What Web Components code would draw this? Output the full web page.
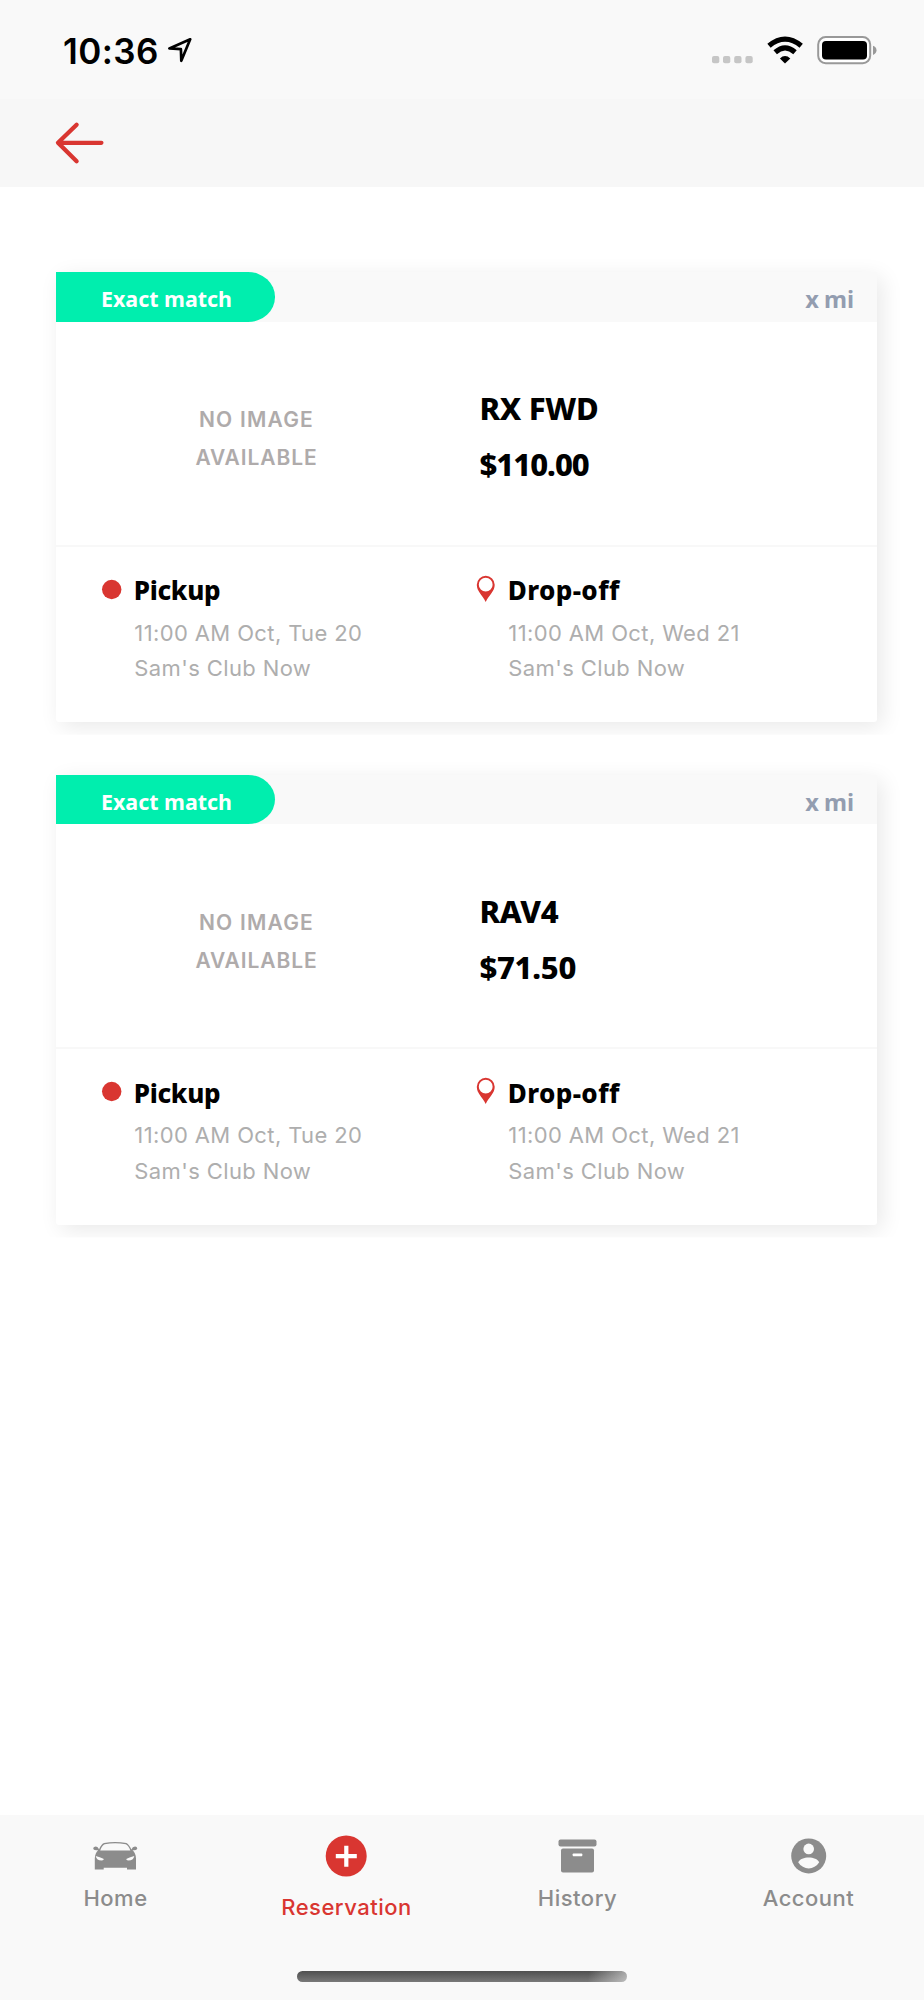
<!DOCTYPE html>
<html lang="en"><head><meta charset="utf-8"><title>Reservation</title>
<style>html,body{margin:0;background:#fff}body{font-family:Inter,"Liberation Sans",sans-serif}</style></head>
<body><reservation-app></reservation-app>
<script>
const define=(name,html)=>customElements.define(name,class extends HTMLElement{
  constructor(){super();this.attachShadow({mode:'open'}).innerHTML=html;}
});
define('status-bar',`<style>
:host{display:flex;justify-content:space-between;height:99px;box-sizing:border-box;background:#f9f9f9;color:#000}
.time{display:flex;margin-left:63px}.time span{font-size:35px;font-weight:600;line-height:40px;margin-top:31px;letter-spacing:.4px;width:105px;white-space:nowrap}
svg{display:block}</style>
<div class="time"><span>10:36</span><svg width="30" height="99" viewBox="168 0 30 99"><path d="M190.2 39.3 169.4 48.4 180.9 49.2 181.3 60.8Z" fill="none" stroke="#000" stroke-width="2.7" stroke-linejoin="round"/></svg></div>
<svg width="224" height="99" viewBox="700 0 224 99"><g fill="#c6c6c6"><rect x="712" y="56" width="7.3" height="7.3" rx="2"/><rect x="723" y="56" width="7.3" height="7.3" rx="2"/><rect x="734.2" y="56" width="7.3" height="7.3" rx="2"/><rect x="745.4" y="56" width="7.3" height="7.3" rx="2"/></g>
<path d="M785 63.4 779.9 58.4Q785 53.8 790.3 58.4Z"/><g fill="none" stroke="#000" stroke-width="5.2"><path d="M769 45.8Q785 32.5 801.2 45.8"/><path d="M775.2 52.2Q785 43.5 795 52.2"/></g>
<rect x="818.2" y="37" width="52" height="26.2" rx="7.5" fill="#fff" stroke="#999" stroke-width="2"/><rect x="822" y="41" width="45" height="18.5" rx="4"/><path d="M873 45.7q3.5 1.4 3.5 4.6t-3.5 4.6Z" fill="#999"/></svg>`);
define('nav-header',`<style>:host{display:flex;height:88px;background:#f7f7f7}svg{margin-left:50px}</style>
<svg width="60" height="88" viewBox="50 99 60 88"><path d="M101.4 142.8H58M76.6 124.7 58 142.8 76.6 161.2" fill="none" stroke="#d93631" stroke-width="4.3" stroke-linecap="round" stroke-linejoin="round"/></svg>`);
define('trip-stop',`<style>
:host{display:grid;grid-template-columns:38px 1fr;width:374px}
h3{margin:0 0 0 -1.3px;font:800 26px/36px "Noto Sans",sans-serif;padding-top:25.6px;white-space:nowrap;letter-spacing:-.3px}
p{margin:0 0 0 -.7px;grid-column:2;font-size:22px;line-height:35.5px;color:#aeaeae;letter-spacing:.38px;white-space:nowrap}
.d{padding-top:7.4px}
.icon{height:61px}
</style><div class="icon"><slot name="icon"></slot></div><h3><slot name="title"></slot></h3><p class="d"><slot name="date"></slot></p><p><slot name="place"></slot></p>`);
define('vehicle-card',`<style>
:host{display:block;width:821px;height:450px;background:#fff;border-radius:3px;box-shadow:5px 5px 22px rgba(0,0,0,.09);clip-path:inset(-22px -30px -12.7px -30px)}
header{height:49.6px;background:#f9f9f9;display:flex;justify-content:space-between}
.tag{width:219px;box-sizing:border-box;padding:9px 0 0 45px;background:#00eeae;border-radius:0 27px 27px 0/0 24.8px 24.8px 0;color:#fff;font:700 21.4px/36px "Noto Sans",sans-serif;white-space:nowrap}
.dist{font:700 23.6px/36px "Noto Sans",sans-serif;padding:9px 23px 0 0;color:#939db0;word-spacing:-1px}
.car{display:flex;height:223px;border-bottom:2px solid #f8f8f8}
.none{width:401px;padding-top:79.2px;text-align:center;color:#afabab;font-size:21px;font-weight:600;line-height:38px;letter-spacing:.9px}
.wide{letter-spacing:1.2px}
.info{margin-left:22.5px;padding-top:58.3px;font:800 31px/56px "Noto Sans",sans-serif;letter-spacing:-.3px}
.stops{display:flex;padding-left:41px}
svg{display:block}
</style>
<header><span class="tag"><span>Exact match</span></span><span class="dist">x mi</span></header>
<div class="car"><div class="none"><span class="wide">NO IMAGE</span><br><span>AVAILABLE</span></div><div class="info"><slot name="model"></slot><br><slot name="price"></slot></div></div>
<div class="stops"><trip-stop><svg slot="icon" width="38" height="62" viewBox="97 547 38 62"><circle cx="111.7" cy="589.5" r="9.7" fill="#d93631"/></svg><span slot="title">Pickup</span><span slot="date">11:00 AM Oct, Tue 20</span><span slot="place">Sam's Club Now</span></trip-stop>
<trip-stop><svg slot="icon" width="38" height="62" viewBox="471 547 38 62"><path fill="#d93631" fill-rule="evenodd" d="M485.7 602C482 594.5 476.8 591.3 476.8 584.8A8.9 8.9 0 0 1 494.7 584.8C494.7 591.3 489.5 594.5 485.7 602ZM485.7 577.8A6.9 6.9 0 1 0 485.7 591.6A6.9 6.9 0 1 0 485.7 577.8Z"/></svg><span slot="title" style="letter-spacing:.4px">Drop-off</span><span slot="date">11:00 AM Oct, Wed 21</span><span slot="place">Sam's Club Now</span></trip-stop></div>`);
define('tab-item',`<style>
:host{display:flex;flex-direction:column;align-items:center;width:231px;color:#8c8c8c}
:host([active]){color:#d93631}
span{font-size:22px;font-weight:450;line-height:32px;letter-spacing:.5px}
:host([active]) span{margin-top:9px}
</style><slot name="icon"></slot><span><slot></slot></span>`);
define('tab-bar',`<style>
:host{display:flex;flex-direction:column;align-items:center;height:185.5px;background:#f9f9f9}
nav{display:flex;width:924px;height:156.5px}svg{display:block;margin-top:-.6px}
.home{width:330px;height:11px;border-radius:6px;background:linear-gradient(100deg,transparent 88%,#f9f9f988 100%),linear-gradient(#4f4f4f,#797979)}
</style><nav>
<tab-item><svg slot="icon" width="60" height="68" viewBox="86 1814.5 60 68" fill="#8c8c8c"><path fill-rule="evenodd" d="M99 1850Q101.2 1844.6 104 1843.5Q115 1841.4 126.5 1843.5Q129.2 1845 131.4 1850Q132.5 1847 135 1847Q137.5 1847.3 137.2 1849.5Q136 1851.2 132.5 1850.7Q135.8 1853.4 136 1859V1870H127V1868.2H103.7V1870H94.8V1859Q95 1853.4 98.2 1850.7Q94.5 1851.2 93.2 1849.5Q93 1847.3 95.5 1847Q98 1847 99 1850ZM100.2 1851H130.4Q128.2 1845.5 125.8 1844.7Q115 1843 104.7 1844.7Q102.2 1845.5 100.2 1851ZM95.7 1856.5Q96.7 1861 101.5 1861Q104.5 1861 103.4 1859.3Q100 1857.5 95.7 1856.5ZM134.3 1856.5Q130 1857.5 126.7 1859.3Q125.5 1861 128.5 1861Q133.4 1861 134.3 1856.5Z"/></svg>Home</tab-item>
<tab-item active><svg slot="icon" width="60" height="68" viewBox="317 1814.5 60 68"><circle cx="346.2" cy="1856.5" r="20.5" fill="#d93631"/><path d="M335.8 1856.6h21M346.3 1846.2v21" stroke="#fff" stroke-width="4.2"/></svg>Reservation</tab-item>
<tab-item><svg slot="icon" width="60" height="68" viewBox="548 1814.5 60 68" fill="#8c8c8c"><rect x="558.5" y="1840" width="38" height="7" rx="2"/><rect x="561" y="1849" width="33" height="24" rx="2"/><rect x="572.7" y="1854" width="9.6" height="2.7" rx=".7" fill="#fff"/></svg>History</tab-item>
<tab-item><svg slot="icon" width="60" height="68" viewBox="779 1814.5 60 68"><circle cx="808.7" cy="1856.4" r="17.5" fill="#8c8c8c"/><g fill="#f9f9f9"><circle cx="808.7" cy="1849.4" r="5.3"/><path d="M798.2 1862.8C801 1856.4 816.4 1856.4 819.2 1862.8C814.2 1871 803.2 1871 798.2 1862.8Z"/></g></svg>Account</tab-item>
</nav><div class="home"></div>`);
define('reservation-app',`<style>
:host{display:flex;flex-direction:column;width:924px;height:2000px;background:#fff}
main{flex:1;display:flex;flex-direction:column;gap:52.85px;padding:85px 47px 0 56px}
</style><status-bar></status-bar><nav-header></nav-header><main>
<vehicle-card><span slot="model">RX FWD</span><span slot="price" style="letter-spacing:-1px">$110.00</span></vehicle-card>
<vehicle-card><span slot="model">RAV4</span><span slot="price">$71.50</span></vehicle-card></main><tab-bar></tab-bar>`);
</script></body></html>
